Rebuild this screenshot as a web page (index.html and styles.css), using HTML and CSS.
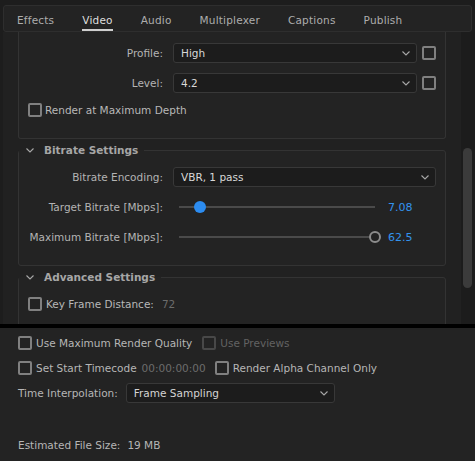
FILE: index.html
```html
<!DOCTYPE html>
<html lang="en">
<head>
    <meta charset="UTF-8">
    <title>Export Settings - Video</title>
    <link rel="stylesheet" href="styles.css">
</head>
<body>
    <div class="top-strip"></div>
    <div class="tabs">
        <span class="tab">Effects</span>
        <span class="tab active">Video</span>
        <span class="tab">Audio</span>
        <span class="tab">Multiplexer</span>
        <span class="tab">Captions</span>
        <span class="tab">Publish</span>
    </div>

    <div class="main">
        <div class="scroll-content">
            <div class="group group-cut">
                <div class="form-grid">
                    <span class="field-label">Profile:</span>
                    <div class="field-with-check">
                        <div class="dropdown">High
                            <svg class="chevron" width="8" height="5" viewBox="0 0 8 5"><polyline points="0.5,0.5 4,4 7.5,0.5" /></svg>
                        </div>
                        <span class="checkbox"></span>
                    </div>
                    <span class="field-label">Level:</span>
                    <div class="field-with-check">
                        <div class="dropdown">4.2
                            <svg class="chevron" width="8" height="5" viewBox="0 0 8 5"><polyline points="0.5,0.5 4,4 7.5,0.5" /></svg>
                        </div>
                        <span class="checkbox"></span>
                    </div>
                </div>
                <div class="check-row"><span class="checkbox"></span>Render at Maximum Depth</div>
            </div>

            <fieldset class="group">
                <legend>
                    <svg class="legend-chevron" width="8" height="5" viewBox="0 0 8 5"><polyline points="0.5,0.5 4,4 7.5,0.5" /></svg>
                    Bitrate Settings
                </legend>
                <div class="form-grid bitrate-grid">
                    <span class="field-label">Bitrate Encoding:</span>
                    <div class="dropdown">VBR, 1 pass
                        <svg class="chevron" width="8" height="5" viewBox="0 0 8 5"><polyline points="0.5,0.5 4,4 7.5,0.5" /></svg>
                    </div>
                    <span class="field-label">Target Bitrate [Mbps]:</span>
                    <div class="slider-cell">
                        <div class="slider">
                            <div class="track"></div>
                            <span class="thumb thumb-active" style="left: 10.7%"></span>
                        </div>
                        <span class="slider-value">7.08</span>
                    </div>
                    <span class="field-label">Maximum Bitrate [Mbps]:</span>
                    <div class="slider-cell">
                        <div class="slider">
                            <div class="track"></div>
                            <span class="thumb thumb-ring" style="left: 100%"></span>
                        </div>
                        <span class="slider-value">62.5</span>
                    </div>
                </div>
            </fieldset>

            <fieldset class="group">
                <legend>
                    <svg class="legend-chevron" width="8" height="5" viewBox="0 0 8 5"><polyline points="0.5,0.5 4,4 7.5,0.5" /></svg>
                    Advanced Settings
                </legend>
                <div class="check-row keyframe-row">
                    <span class="checkbox"></span>Key Frame Distance:
                    <span class="muted keyframe-value">72</span>
                </div>
            </fieldset>
        </div>
        <div class="scrollbar"><div class="scroll-thumb"></div></div>
    </div>

    <div class="divider"></div>

    <div class="bottom">
        <div class="bottom-row">
            <span class="check-item"><span class="checkbox"></span>Use Maximum Render Quality</span>
            <span class="check-item disabled"><span class="checkbox"></span>Use Previews</span>
        </div>
        <div class="bottom-row row-timecode">
            <span class="check-item"><span class="checkbox"></span>Set Start Timecode</span>
            <span class="muted timecode">00:00:00:00</span>
            <span class="check-item"><span class="checkbox"></span>Render Alpha Channel Only</span>
        </div>
        <div class="bottom-row row-interp">
            <span>Time Interpolation:</span>
            <div class="dropdown interp-dropdown">Frame Sampling
                <svg class="chevron" width="8" height="5" viewBox="0 0 8 5"><polyline points="0.5,0.5 4,4 7.5,0.5" /></svg>
            </div>
        </div>
        <div class="bottom-row row-size">
            <span>Estimated File Size:</span>
            <span class="size-value">19 MB</span>
        </div>
    </div>
</body>
</html>
```

FILE: styles.css
```css
body {
    margin: 0;
    padding: 0;
    width: 475px;
    height: 461px;
    overflow: hidden;
    background: #1d1d1d;
    font-family: "DejaVu Sans", "Liberation Sans", sans-serif;
    font-size: 10.5px;
    color: #b4b4b4;
}

/* tab bar */
.top-strip {
    height: 5px;
}
.tabs {
    display: flex;
    align-items: flex-end;
    gap: 28px;
    height: 27px;
    box-sizing: border-box;
    margin: 0 3px;
    padding-left: 13px;
    border: 1px solid #2e2e2e;
    border-radius: 3px;
    background: #232323;
}
.tab {
    line-height: 14px;
    padding-bottom: 2px;
    border-bottom: 2px solid transparent;
    color: #adadad;
    letter-spacing: 0.2px;
}
.tab.active {
    color: #dedede;
    border-bottom-color: #cfcfcf;
}

/* scrolled settings area */
.main {
    display: flex;
    height: 292px;
    margin-left: 3px;
    background: #212121;
}
.scroll-content {
    flex: 1;
    overflow: hidden;
    padding-left: 15px;
    padding-right: 15px;
}
.scrollbar {
    width: 14px;
    background: #1c1c1c;
}
.scroll-thumb {
    width: 9px;
    height: 140px;
    margin: 116px 0 0 2px;
    border-radius: 5px;
    background: #3b3b3b;
}

.group {
    margin: 0;
    padding: 0;
    border: 1px solid #333;
    border-radius: 3px;
    background: #232323;
    min-width: 0;
}
.group-cut {
    border-top: none;
    border-radius: 0 0 3px 3px;
    padding-bottom: 21px;
}
fieldset.group {
    margin-top: 4px;
}
.group legend {
    display: flex;
    align-items: center;
    gap: 10px;
    padding: 0 6px 0 7px;
    line-height: 14px;
    font-weight: bold;
    color: #a6a6a6;
}
.legend-chevron polyline,
.chevron polyline {
    fill: none;
    stroke: #a8a8a8;
    stroke-width: 1.1;
}

.form-grid {
    display: grid;
    grid-template-columns: 144px 1fr;
    column-gap: 10px;
    row-gap: 10px;
    align-items: center;
    padding: 11px 9px 0 0;
}
.bitrate-grid {
    padding-top: 10px;
    padding-bottom: 18px;
}
.field-label {
    text-align: right;
    white-space: nowrap;
}
.field-with-check {
    display: flex;
    align-items: center;
    gap: 5px;
}
.dropdown {
    flex: 1;
    display: flex;
    align-items: center;
    justify-content: space-between;
    height: 20px;
    box-sizing: border-box;
    padding: 0 6px 0 7px;
    border: 1px solid #383838;
    border-radius: 3px;
    background: #1c1c1c;
    color: #d8d8d8;
}
.checkbox {
    display: inline-block;
    flex: none;
    width: 14px;
    height: 14px;
    box-sizing: border-box;
    border: 2px solid #808080;
    border-radius: 2px;
}

.check-row {
    display: flex;
    align-items: center;
    gap: 3px;
    height: 14px;
    margin-top: 10px;
    padding-left: 9px;
    color: #b8b8b8;
}
.keyframe-row {
    margin-top: 13px;
    padding-bottom: 20px;
    gap: 4px;
}
.keyframe-value {
    margin-left: 4px;
}
.muted {
    color: #6c6c6c;
}

/* sliders */
.slider-cell {
    display: flex;
    align-items: center;
    height: 20px;
}
.slider {
    position: relative;
    width: 196px;
    margin: 0 6px;
}
.track {
    height: 2px;
    background: #4a4a4a;
}
.thumb {
    position: absolute;
    top: 1px;
    width: 12px;
    height: 12px;
    box-sizing: border-box;
    border-radius: 50%;
    transform: translate(-50%, -50%);
}
.thumb-active {
    background: #2c8cf0;
}
.thumb-ring {
    border: 2px solid #8c8c8c;
    background: #232323;
}
.slider-value {
    margin-left: 7px;
    color: #3393ee;
    font-size: 11px;
}

.divider {
    height: 4px;
    background: #000;
}

/* bottom options */
.bottom {
    height: 129px;
    padding: 8px 0 0 18px;
    background: #232323;
    color: #b6b6b6;
}
.bottom-row {
    display: flex;
    align-items: center;
    height: 14px;
}
.check-item {
    display: flex;
    align-items: center;
    gap: 4px;
    margin-right: 10px;
}
.check-item.disabled {
    color: #626262;
}
.check-item.disabled .checkbox {
    border-color: #484848;
}
.row-timecode {
    margin-top: 11px;
}
.timecode {
    margin: 0 9px 0 -5px;
}
.row-interp {
    margin-top: 8px;
    height: 20px;
    gap: 8px;
}
.interp-dropdown {
    flex: none;
    width: 209px;
    color: #d4d4d4;
}
.row-size {
    margin-top: 35px;
    gap: 7px;
}
```
